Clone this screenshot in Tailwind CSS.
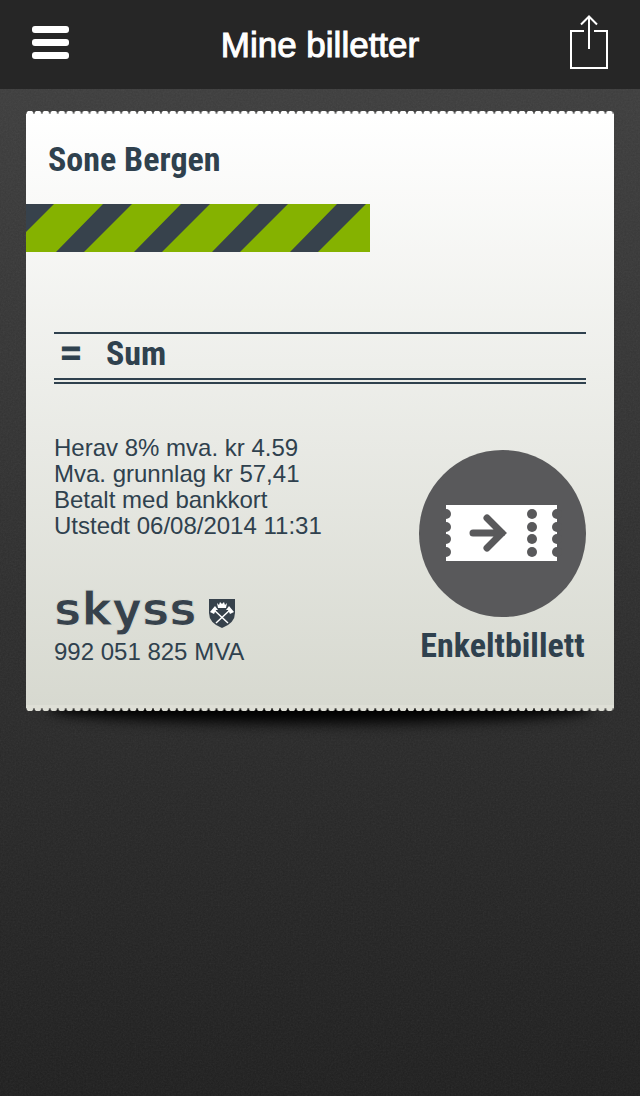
<!DOCTYPE html>
<html lang="no">
<head>
<meta charset="utf-8">
<meta name="viewport" content="width=device-width, initial-scale=1">
<title>Mine billetter</title>
<script src="https://cdn.jsdelivr.net/npm/@tailwindcss/browser@4"></script>
</head>
<body class="relative isolate flex min-h-screen flex-col bg-linear-to-b from-[#404040] to-[#1f1f1f] font-['Liberation_Sans',Arial,sans-serif]">
  <!-- fine grain over the backdrop -->
  <svg class="absolute inset-0 -z-10 h-full w-full opacity-8" aria-hidden="true">
    <filter id="grain"><feTurbulence type="fractalNoise" baseFrequency="0.6" numOctaves="2"/><feColorMatrix type="saturate" values="0"/></filter>
    <rect width="100%" height="100%" filter="url(#grain)"/>
  </svg>

  <header class="grid h-[89px] grid-cols-[1fr_auto_1fr] items-center bg-[#262626] px-8">
    <button type="button" aria-label="Meny" class="flex w-[37px] flex-col gap-[6px] pb-1">
      <span class="h-[7px] w-full rounded-[3px] bg-white"></span>
      <span class="h-[7px] w-full rounded-[3px] bg-white"></span>
      <span class="h-[7px] w-full rounded-[3px] bg-white"></span>
    </button>
    <h1 class="text-[35px] leading-10 font-normal text-white [-webkit-text-stroke:1px_#fff]">Mine billetter</h1>
    <button type="button" aria-label="Del" class="justify-self-end pb-[6px]">
      <svg width="38" height="54" viewBox="0 0 38 54" fill="none" stroke="#fff" stroke-width="2" class="block">
        <path d="M14 16H1V53H37V16H24M19 2V34"/>
        <path d="M11 9.500L19 1.500L27 9.500"/>
      </svg>
    </button>
  </header>

  <main class="px-[26px] pt-[22px] pb-8">
    <article class="relative isolate text-[#2f414e]">
      <div class="absolute inset-x-6 -bottom-3 -z-10 h-9 rounded-[50%/40%] bg-black blur-[7px]"></div>
      <div class="h-[3px] bg-[radial-gradient(circle_at_50%_100%,#fff_3px,transparent_4px)] bg-size-[8px_3px] bg-repeat-round"></div>
      <div class="bg-linear-to-b from-white to-[#d7d9d0] pt-[25px] pb-10">
        <h2 class="px-[22px] font-['Liberation_Sans_Narrow','Roboto_Condensed',sans-serif] text-[34px] leading-10 font-bold">Sone Bergen</h2>
        <svg width="344" height="48" viewBox="0 0 344 48" class="mt-[25px] block" aria-hidden="true">
          <path fill="#85b200" d="M0 0H344V48H0Z"/>
          <path fill="#37424c" d="M0 0H28L0 28ZM77 0H106L58 48H30ZM155 0H184L136 48H108ZM233 0H262L214 48H186ZM311 0H340L292 48H264Z"/>
        </svg>
        <div class="mx-7 mt-20 flex h-[46px] items-center border-t-2 border-[#2f414e] pb-[6px] font-['Liberation_Sans_Narrow','Roboto_Condensed',sans-serif] text-[34px] leading-10 font-bold">
          <span class="w-[52px] pl-[7px] font-['Liberation_Sans',Arial,sans-serif] [-webkit-text-stroke:1px_#2f414e]">=</span>
          <span>Sum</span>
        </div>
        <div class="mx-7 h-[6px] border-y-2 border-[#2f414e]"></div>
        <div class="mx-7 mt-[51px] flex items-start justify-between">
          <div class="text-2xl leading-[26px]">
            <p>Herav 8% mva. kr 4.59</p>
            <p>Mva. grunnlag kr 57,41</p>
            <p>Betalt med bankkort</p>
            <p>Utstedt 06/08/2014 11:31</p>
            <div class="mt-[42px] flex h-[58px] items-start gap-[11px] text-[#37424c]">
              <span class="font-['DejaVu_Sans',sans-serif] text-[46px] leading-[56px] font-bold [-webkit-text-stroke:1px_#dbddd5]">skyss</span>
              <svg width="28" height="30" viewBox="0 0 28 30" class="mt-[18px]" aria-hidden="true">
                <path fill="#37424c" d="M1 0H27V14Q27 24 14 29Q1 24 1 14Z"/>
                <path d="M5 10L20 24M23 10L8 24" fill="none" stroke="#fff" stroke-width="1.500"/>
                <path fill="#fff" d="M2 13L7 7L10 11L8 11L6 15ZM26 13L21 7L18 11L20 11L22 15ZM9 4L11 6L12 3L14 5L14 2L14 5L16 3L17 6L19 4L18 9H10Z"/>
              </svg>
            </div>
            <p>992 051 825 MVA</p>
          </div>
          <div class="mt-[15px] flex w-[167px] flex-col items-center">
            <svg width="167" height="167" viewBox="0 0 167 167" aria-hidden="true">
              <circle cx="83.500" cy="83.500" r="83.500" fill="#59595b"/>
              <path fill="#fff" d="M27 55H138V111H27Z"/>
              <g fill="#59595b">
                <circle cx="27" cy="64" r="5"/><circle cx="27" cy="77" r="5"/><circle cx="27" cy="89" r="5"/><circle cx="27" cy="102" r="5"/>
                <circle cx="113" cy="64" r="5"/><circle cx="113" cy="77" r="5"/><circle cx="113" cy="89" r="5"/><circle cx="113" cy="102" r="5"/>
                <circle cx="138" cy="64" r="5"/><circle cx="138" cy="77" r="5"/><circle cx="138" cy="89" r="5"/><circle cx="138" cy="102" r="5"/>
              </g>
              <path d="M54 83H83M68 68L83 83L68 98" fill="none" stroke="#59595b" stroke-width="7" stroke-linecap="round"/>
            </svg>
            <p class="mt-2 font-['Liberation_Sans_Narrow','Roboto_Condensed',sans-serif] text-[34px] leading-10 font-bold">Enkeltbillett</p>
          </div>
        </div>
      </div>
      <div class="h-[3px] bg-[#dedfd6]"></div>
      <div class="h-[3px] bg-[radial-gradient(circle_at_50%_0%,#dedfd6_3px,transparent_4px)] bg-size-[8px_3px] bg-repeat-round"></div>
    </article>
  </main>
</body>
</html>
